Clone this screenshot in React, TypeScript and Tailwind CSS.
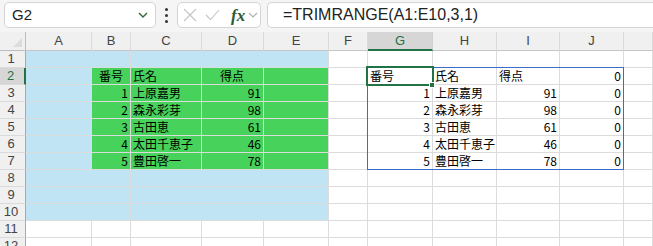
const COLS = ["A", "B", "C", "D", "E", "F", "G", "H", "I", "J", ""];

const names = ["上原嘉男", "森永彩芽", "古田恵", "太田千恵子", "豊田啓一"];
const scores = [91, 98, 61, 46, 78];

type Cell = { text?: string | number; align?: "l" | "r" | "c" | "d" };

const BLUE = "bg-[#c0e4f4]";
const GREEN = "bg-[#47d35b]";

function fillFor(row: number, col: number) {
  // col: 0 = A ... 10 = K
  if (row >= 2 && row <= 7 && col >= 1 && col <= 4) return GREEN;
  if (row <= 10 && col <= 4) return BLUE;
  return "bg-white";
}

function cellFor(row: number, col: number): Cell {
  if (row === 2) {
    if (col === 1) return { text: "番号", align: "c" };
    if (col === 2) return { text: "氏名", align: "l" };
    if (col === 3) return { text: "得点", align: "d" };
    if (col === 6) return { text: "番号", align: "l" };
    if (col === 7) return { text: "氏名", align: "l" };
    if (col === 8) return { text: "得点", align: "l" };
    if (col === 9) return { text: 0, align: "r" };
  }
  if (row >= 3 && row <= 7) {
    const i = row - 3;
    if (col === 1 || col === 6) return { text: i + 1, align: "r" };
    if (col === 2 || col === 7) return { text: names[i], align: "l" };
    if (col === 3 || col === 8) return { text: scores[i], align: "r" };
    if (col === 9) return { text: 0, align: "r" };
  }
  return {};
}

const alignClass = {
  l: "justify-start pl-[2px]",
  r: "justify-end pr-[2px]",
  c: "justify-center",
  d: "justify-start pl-[18px]",
};

const App = () => {
  const rows = Array.from({ length: 12 }, (_, i) => i + 1);

  return (
    <div className="w-[653px] h-[246px] overflow-hidden bg-[#f5f5f5] font-['Noto_Sans_CJK_JP',sans-serif] text-black">
      {/* formula bar */}
      <div className="flex items-start h-[32px] pt-[2px] pl-[4px]">
        <div className="flex items-center justify-between w-[152px] h-[26px] rounded-[5px] border border-[#d4d4d4] bg-white pl-[7px] pr-[7px]">
          <span className="font-['Liberation_Sans',sans-serif] text-[15px] text-[#222]">G2</span>
          <svg width="10" height="6" viewBox="0 0 10 6">
            <path d="M1 1 L5 5 L9 1" fill="none" stroke="#2f6b3c" strokeWidth="1.4" />
          </svg>
        </div>
        <div className="flex flex-col items-center justify-center gap-[3px] w-[21px] h-[26px]">
          <span className="w-[3px] h-[3px] rounded-full bg-[#333]" />
          <span className="w-[3px] h-[3px] rounded-full bg-[#333]" />
          <span className="w-[3px] h-[3px] rounded-full bg-[#333]" />
        </div>
        <div className="flex items-center w-[84px] h-[26px] rounded-[5px] border border-[#d4d4d4] bg-white pl-[5px]">
          <svg width="14" height="14" viewBox="0 0 14 14">
            <path d="M1 1 L13 13 M13 1 L1 13" stroke="#c4c4c4" strokeWidth="1.1" fill="none" />
          </svg>
          <svg width="15" height="12" viewBox="0 0 15 12" className="ml-[8px]">
            <path d="M1 6 L5.5 10.5 L14 1" stroke="#c4c4c4" strokeWidth="1.1" fill="none" />
          </svg>
          <span className="ml-[11px] font-['Liberation_Serif',serif] italic font-bold text-[17px] leading-none text-[#2d5a2f]">
            fx
          </span>
          <svg width="10" height="6" viewBox="0 0 10 6" className="ml-[3px]">
            <path d="M1 1 L5 5 L9 1" fill="none" stroke="#b0b0b0" strokeWidth="1.2" />
          </svg>
        </div>
        <div className="flex items-center flex-1 h-[26px] ml-[6px] rounded-l-[5px] border border-r-0 border-[#d4d4d4] bg-white pl-[15px]">
          <span className="font-['Liberation_Sans',sans-serif] text-[16px] text-[#222]">
            =TRIMRANGE(A1:E10,3,1)
          </span>
        </div>
      </div>

      {/* sheet grid */}
      <div className="relative">
        <div className="grid grid-cols-[26px_66px_39px_71px_62px_65px_39px_65px_64px_63px_64px_1fr]">
          {/* header row */}
          <div className="relative h-[19px] bg-[#f0f0f0] border-r border-b border-[#bdbdbd]">
            <svg width="9" height="9" viewBox="0 0 9 9" className="absolute right-[3px] bottom-[3px]">
              <path d="M9 0 L9 9 L0 9 Z" fill="#dcdcdc" />
            </svg>
          </div>
          {COLS.map((c, i) =>
            c === "G" ? (
              <div
                key={i}
                className="flex items-center justify-center h-[19px] bg-[#d6d6d6] border-r border-[#d0d0d0] border-b-2 border-b-[#217346] font-['Liberation_Sans',sans-serif] text-[13px] text-[#217346]"
              >
                {c}
              </div>
            ) : (
              <div
                key={i}
                className="flex items-center justify-center h-[19px] bg-[#f0f0f0] border-r border-b border-r-[#dadada] border-b-[#c6c6c6] font-['Liberation_Sans',sans-serif] text-[13px] text-[#444]"
              >
                {c}
              </div>
            )
          )}

          {rows.map((r) => (
            <div key={r} className="contents">
              {r === 2 ? (
                <div className="flex items-center justify-center pr-[3px] h-[17px] bg-[#d6d6d6] border-b border-b-[#dadada] border-r-2 border-r-[#217346] font-['Liberation_Sans',sans-serif] text-[13px] text-[#217346]">
                  {r}
                </div>
              ) : (
                <div className="flex items-center justify-center pr-[3px] h-[17px] bg-[#f0f0f0] border-b border-b-[#dadada] border-r border-r-[#a8a8a8] font-['Liberation_Sans',sans-serif] text-[13px] text-[#444]">
                  {r}
                </div>
              )}
              {COLS.map((_, c) => {
                const cell = cellFor(r, c);
                return (
                  <div
                    key={c}
                    className={`flex items-center h-[17px] border-r border-b border-[#dcdcdc] text-[12px] leading-none whitespace-nowrap ${fillFor(r, c)} ${
                      cell.align ? alignClass[cell.align] : ""
                    }`}
                  >
                    {cell.text}
                  </div>
                );
              })}
            </div>
          ))}
        </div>

        {/* spill range outline G2:J7 */}
        <div className="absolute left-[367px] top-[35px] w-[257px] h-[103px] border border-[#3a6cc8] pointer-events-none" />
        {/* active cell G2 */}
        <div className="absolute left-[366px] top-[34px] w-[68px] h-[20px] border-2 border-[#217346] pointer-events-none" />
        <div className="absolute left-[429px] top-[50px] w-[6px] h-[6px] bg-[#217346] border border-white pointer-events-none" />
      </div>
    </div>
  );
};

export default App;
